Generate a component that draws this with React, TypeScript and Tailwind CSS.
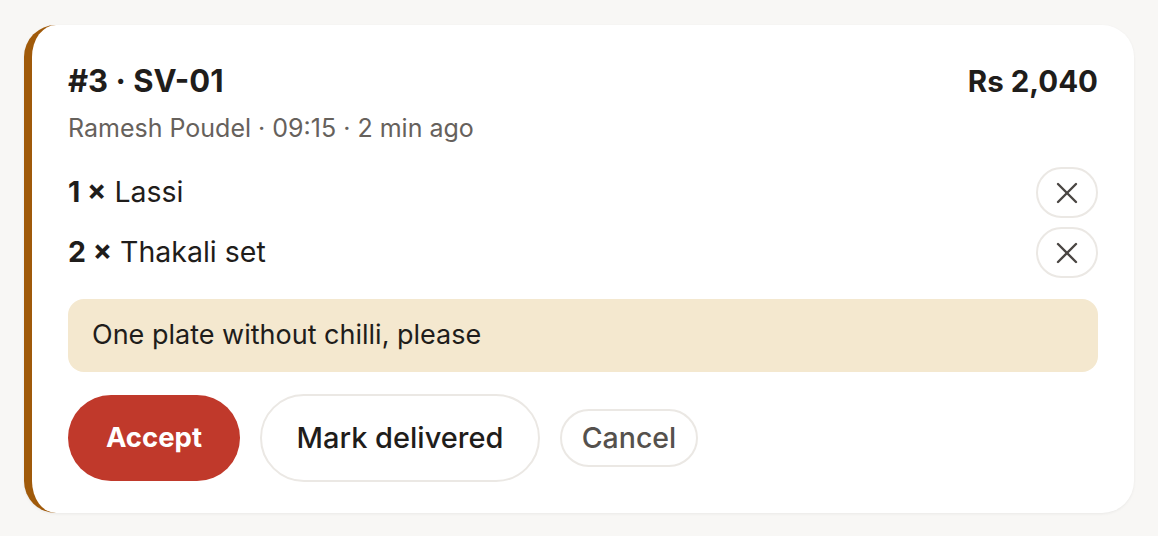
import { X } from "lucide-react"

const items = [
  { qty: 1, name: "Lassi" },
  { qty: 2, name: "Thakali set" },
]

export default function App() {
  return (
    <div
      className="min-h-[536px] bg-[#f8f7f5] pt-[25px] pl-[24px] pr-[24px]"
      style={{ fontFamily: "Inter, 'Noto Sans', sans-serif" }}
    >
      <div className="h-[488px] rounded-[32px] border-l-[8px] border-[#a05a0a] bg-white px-[36px] pt-[36px] shadow-[0_1px_3px_rgba(0,0,0,0.06)]">
        <div className="flex items-center justify-between">
          <h2 className="text-[31px] leading-[40px] font-bold text-[#1f1d1b]">#3 · SV-01</h2>
          <span className="text-[29.5px] leading-[40px] font-bold text-[#1f1d1b]">Rs 2,040</span>
        </div>
        <p className="mt-[11px] text-[25px] leading-[32px] text-[#66615c]">Ramesh Poudel · 09:15 · 2 min ago</p>

        <ul className="mt-[23px] flex flex-col gap-[9px]">
          {items.map((item) => (
            <li key={item.name} className="flex h-[51px] items-center justify-between">
              <span className="text-[28.5px] text-[#1f1d1b]">
                <span className="font-bold">{item.qty} ×</span> {item.name}
              </span>
              <button className="flex h-[51px] w-[62px] items-center justify-center rounded-full border-2 border-[#ebe8e4] text-[#4a4643]">
                <X className="h-[36px] w-[36px]" strokeWidth={1.6} />
              </button>
            </li>
          ))}
        </ul>

        <div className="mt-[21px] flex h-[73px] items-center rounded-[16px] bg-[#f4e8cf] px-[24px] text-[27px] text-[#1f1d1b]">
          One plate without chilli, please
        </div>

        <div className="mt-[22px] flex items-center gap-[20px]">
          <button className="h-[86px] w-[172px] rounded-full bg-[#c0392b] text-[27.5px] font-bold text-white">
            Accept
          </button>
          <button className="h-[88px] w-[280px] rounded-full border-2 border-[#ebe8e4] bg-white text-[29px] font-medium text-[#1f1d1b]">
            Mark delivered
          </button>
          <button className="h-[58px] w-[138px] rounded-full border-2 border-[#ebe8e4] bg-white text-[28.5px] font-medium text-[#55514d]">
            Cancel
          </button>
        </div>
      </div>
    </div>
  )
}
